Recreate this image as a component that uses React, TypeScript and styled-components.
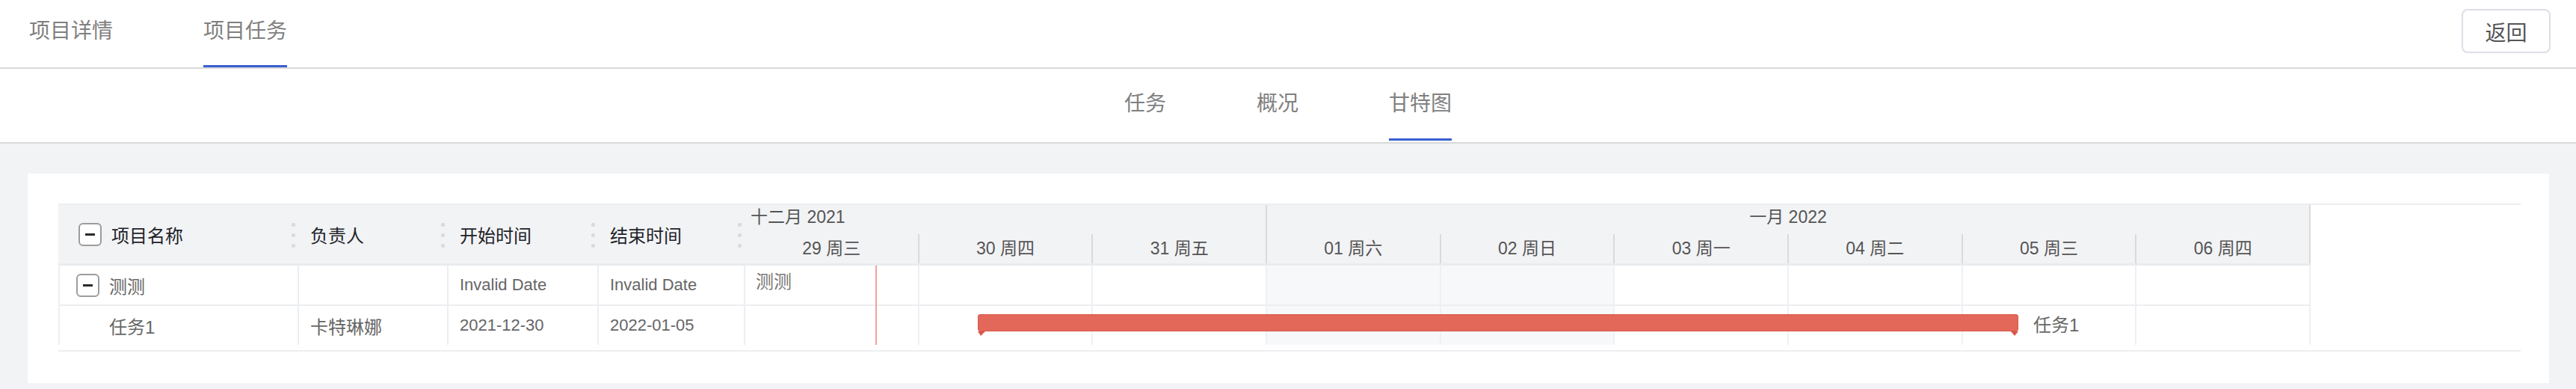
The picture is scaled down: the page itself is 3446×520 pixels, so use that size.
import React from 'react'
import styled, { createGlobalStyle } from 'styled-components'

const GlobalStyle = createGlobalStyle`
  html, body {
    margin: 0;
    padding: 0;
    background: #f2f3f5;
  }
  body {
    font-family: "Liberation Sans", "Noto Sans CJK SC", sans-serif;
  }
  * {
    box-sizing: border-box;
  }
`

// timeline shown in the chart, one column per day
const DAYS = [
  { label: '29 周三' },
  { label: '30 周四' },
  { label: '31 周五' },
  { label: '01 周六', weekend: true },
  { label: '02 周日', weekend: true },
  { label: '03 周一' },
  { label: '04 周二' },
  { label: '05 周三' },
  { label: '06 周四' },
]
const MONTHS = [
  { label: '十二月 2021', span: 3, align: 'left' as const },
  { label: '一月 2022', span: 6, align: 'center' as const },
]
const COLUMNS = [
  { key: 'name', title: '项目名称', width: 322 },
  { key: 'owner', title: '负责人', width: 200 },
  { key: 'start', title: '开始时间', width: 201 },
  { key: 'end', title: '结束时间', width: 196 },
]
const ROWS = [
  { id: 'p1', name: '测测', owner: '', start: 'Invalid Date', end: 'Invalid Date', project: true, bar: null },
  { id: 't1', name: '任务1', owner: '卡特琳娜', start: '2021-12-30', end: '2022-01-05', project: false, bar: { from: 1.337, span: 5.983 } },
]
const TODAY = 0.748

function dayPct(value: number) {
  return `${(value / DAYS.length) * 100}%`
}

function ResizeHandle() {
  return (
    <Dots>
      <Dot />
      <Dot />
      <Dot />
    </Dots>
  )
}

export default function App() {
  return (
    <>
      <GlobalStyle />
      <TopBar>
        <TabList>
          <Tab>项目详情</Tab>
          <Tab $active>项目任务</Tab>
        </TabList>
        <BackButton>返回</BackButton>
      </TopBar>
      <SubBar>
        <SubTab>任务</SubTab>
        <SubTab>概况</SubTab>
        <SubTab $active>甘特图</SubTab>
      </SubBar>
      <Main>
        <Card>
          <Gantt>
            <Grid>
              <HeaderRow>
                {COLUMNS.map((c, i) => (
                  <HeadCell key={c.key} $w={c.width} $first={i === 0}>
                    {i === 0 && <Toggle />}
                    {c.title}
                    <ResizeHandle />
                  </HeadCell>
                ))}
              </HeaderRow>
              {ROWS.map((r) => (
                <BodyRow key={r.id}>
                  <BodyCell $w={COLUMNS[0].width} $first $indent={!r.project}>
                    {r.project && <Toggle />}
                    {r.name}
                  </BodyCell>
                  <BodyCell $w={COLUMNS[1].width}>{r.owner}</BodyCell>
                  <BodyCell $w={COLUMNS[2].width} $latin>{r.start}</BodyCell>
                  <BodyCell $w={COLUMNS[3].width} $latin>{r.end}</BodyCell>
                </BodyRow>
              ))}
            </Grid>
            <Chart>
              <ChartHeader>
                {MONTHS.map((m) => (
                  <MonthCell key={m.label} $span={m.span} $align={m.align}>{m.label}</MonthCell>
                ))}
                {DAYS.map((d) => (
                  <DayCell key={d.label}>{d.label}</DayCell>
                ))}
              </ChartHeader>
              <ChartBody>
                {ROWS.map((r) => (
                  <ChartRow key={r.id}>
                    {DAYS.map((d) => (
                      <DayBg key={d.label} $weekend={!!d.weekend} />
                    ))}
                    {r.project && <RowLabel>{r.name}</RowLabel>}
                    {r.bar && (
                      <Bar style={{ left: dayPct(r.bar.from), width: dayPct(r.bar.span) }}>
                        <BarLabel>{r.name}</BarLabel>
                      </Bar>
                    )}
                  </ChartRow>
                ))}
                <TodayLine style={{ left: dayPct(TODAY) }} />
              </ChartBody>
            </Chart>
            <Blank />
          </Gantt>
        </Card>
      </Main>
    </>
  )
}

const TopBar = styled.header`
  display: flex;
  align-items: flex-start;
  justify-content: space-between;
  height: 92px;
  padding: 0 34px 0 39px;
  background: #fff;
  border-bottom: 2px solid #d9d9d9;
`
const TabList = styled.nav`
  display: flex;
  gap: 121px;
`
const Tab = styled.div<{ $active?: boolean }>`
  height: 90px;
  line-height: 84px;
  font-size: 28px;
  color: #808080;
  white-space: nowrap;
  border-bottom: 3px solid ${({ $active }) => $active ? '#3a60cf' : 'transparent'};
`
const BackButton = styled.button`
  margin-top: 12px;
  width: 119px;
  height: 59px;
  padding: 0;
  background: #fff;
  border: 2px solid #dcdfe6;
  border-radius: 8px;
  font-family: inherit;
  font-size: 28px;
  color: #555;
`
const SubBar = styled.div`
  display: flex;
  justify-content: center;
  gap: 121px;
  height: 100px;
  background: #fff;
  border-bottom: 2px solid #d9d9d9;
`
const SubTab = styled.div<{ $active?: boolean }>`
  height: 96px;
  line-height: 94px;
  font-size: 28px;
  color: #808080;
  white-space: nowrap;
  border-bottom: 3px solid ${({ $active }) => $active ? '#3a60cf' : 'transparent'};
`
const Main = styled.main`
  padding: 40px 36px 8px 37px;
`
const Card = styled.section`
  background: #fff;
  padding: 40px 38px 42px 41px;
`
const Gantt = styled.div`
  display: flex;
  height: 198px;
  padding-bottom: 7px;
  border-top: 2px solid #eceef1;
  border-bottom: 2px solid #eceef1;
`
const Grid = styled.div`
  flex-shrink: 0;
  width: 919px;
`
const HeaderRow = styled.div`
  display: flex;
  height: 81px;
  background: #f2f3f5;
  border-bottom: 3px solid #e9ebee;
`
const HeadCell = styled.div<{ $w: number, $first?: boolean }>`
  display: flex;
  align-items: center;
  width: ${({ $w }) => $w}px;
  padding: 0 5px 0 ${({ $first }) => $first ? '27px' : '15px'};
  font-size: 24px;
  color: #1f2329;
  white-space: nowrap;
`
const Dots = styled.span`
  display: flex;
  flex-direction: column;
  gap: 9px;
  margin-left: auto;
  margin-top: 2px;
`
const Dot = styled.span`
  width: 5px;
  height: 5px;
  border-radius: 2px;
  background: #d9dadd;
`
const Toggle = styled.span`
  display: flex;
  align-items: center;
  justify-content: center;
  flex-shrink: 0;
  width: 31px;
  height: 31px;
  margin-right: 13px;
  background: #fff;
  border: 2px solid #9c9c9c;
  border-radius: 6px;
  &::after {
    content: '';
    width: 13px;
    height: 3px;
    background: #2a2a2a;
  }
`
const BodyRow = styled.div`
  display: flex;
  height: 54px;
  border-bottom: 2px solid #eceef1;
  &:last-child {
    height: 52px;
    border-bottom: 0;
  }
`
const BodyCell = styled.div<{ $w: number, $first?: boolean, $indent?: boolean, $latin?: boolean }>`
  display: flex;
  align-items: center;
  width: ${({ $w }) => $w}px;
  padding-left: ${({ $first, $indent }) => $indent ? '66px' : $first ? '22px' : '15px'};
  border-left: ${({ $first }) => $first ? '2px solid #eceef1' : '0'};
  border-right: 2px solid #eceef1;
  font-size: ${({ $latin }) => $latin ? '22px' : '24px'};
  color: #666;
  white-space: nowrap;
`
const Chart = styled.div`
  flex-shrink: 0;
  width: 2094px;
`
const ChartHeader = styled.div`
  display: grid;
  grid-template-columns: repeat(9, 1fr);
  grid-template-rows: 39px 39px;
  height: 81px;
  background: #f2f3f5;
  border-bottom: 3px solid #e9ebee;
`
const MonthCell = styled.div<{ $span: number, $align: 'left' | 'center' }>`
  grid-column: span ${({ $span }) => $span};
  padding: 0 7px;
  line-height: 32px;
  text-align: ${({ $align }) => $align};
  font-size: 23px;
  color: #555;
  white-space: nowrap;
  border-right: 2px solid #d9dadc;
`
const DayCell = styled.div`
  line-height: 39px;
  text-align: center;
  font-size: 23px;
  color: #555;
  white-space: nowrap;
  border-right: 2px solid #d9dadc;
`
const ChartBody = styled.div`
  position: relative;
`
const ChartRow = styled.div`
  position: relative;
  display: grid;
  grid-template-columns: repeat(9, 1fr);
  height: 54px;
  border-bottom: 2px solid #eceef1;
  &:nth-last-child(2) {
    height: 52px;
    border-bottom: 0;
  }
`
const DayBg = styled.div<{ $weekend: boolean }>`
  background: ${({ $weekend }) => $weekend ? '#f7f8fa' : 'transparent'};
  border-right: 2px solid #eff0f2;
`
const RowLabel = styled.span`
  position: absolute;
  left: 14px;
  top: 8px;
  line-height: 28px;
  font-size: 24px;
  color: #777;
`
const Bar = styled.div`
  position: absolute;
  top: 11px;
  height: 23px;
  background: #e4685a;
  border: 1px solid #d4584b;
  border-radius: 3px;
  &::before, &::after {
    content: '';
    position: absolute;
    bottom: -7px;
    border-top: 6px solid #d9594c;
  }
  &::before {
    left: -1px;
    border-left: 4px solid transparent;
    border-right: 6px solid transparent;
  }
  &::after {
    right: -1px;
    border-left: 5px solid transparent;
    border-right: 5px solid transparent;
  }
`
const BarLabel = styled.span`
  position: absolute;
  left: calc(100% + 21px);
  top: 50%;
  transform: translateY(-50%);
  font-size: 24px;
  color: #666;
  white-space: nowrap;
`
const TodayLine = styled.div`
  position: absolute;
  top: 0;
  bottom: 0;
  width: 2px;
  background: #f3a29d;
`
const Blank = styled.div`
  flex: 1;
`
